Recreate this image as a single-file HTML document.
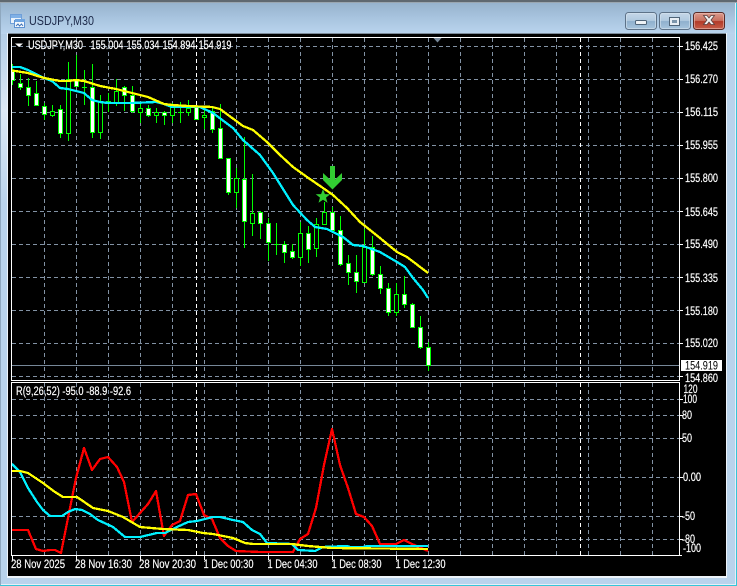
<!DOCTYPE html>
<html><head><meta charset="utf-8"><title>USDJPY,M30</title>
<style>
html,body{margin:0;padding:0;background:#b9d3ec;overflow:hidden}
svg{display:block}
text{font-family:"Liberation Sans",sans-serif;font-size:11.5px;fill:#fff;stroke:#fff;stroke-width:.18px}
</style></head><body>
<svg width="737" height="586" viewBox="0 0 737 586" xmlns="http://www.w3.org/2000/svg">
<defs>
<linearGradient id="tb" x1="0" y1="0" x2="0" y2="1"><stop offset="0" stop-color="#93afc9"/><stop offset=".5" stop-color="#a7c3de"/><stop offset="1" stop-color="#bad4ee"/></linearGradient>
<linearGradient id="ls" x1="0" y1="0" x2="0" y2="1"><stop offset="0" stop-color="#b3cee8"/><stop offset=".45" stop-color="#dce9f5"/><stop offset="1" stop-color="#b9d3ec"/></linearGradient>
<linearGradient id="bn" x1="0" y1="0" x2="0" y2="1"><stop offset="0" stop-color="#c6d8e9"/><stop offset=".48" stop-color="#b0c9df"/><stop offset=".52" stop-color="#8fb0cd"/><stop offset="1" stop-color="#a9c6de"/></linearGradient>
<linearGradient id="bc" x1="0" y1="0" x2="0" y2="1"><stop offset="0" stop-color="#dc9d90"/><stop offset=".48" stop-color="#c9705f"/><stop offset=".52" stop-color="#b23a28"/><stop offset="1" stop-color="#c8604c"/></linearGradient>
<clipPath id="mc"><rect x="12" y="38" width="667" height="342"/></clipPath>
<clipPath id="sc"><rect x="12" y="383" width="667" height="172"/></clipPath>
</defs>

<!-- window frame -->
<rect width="737" height="586" fill="#b9d3ec"/>
<rect width="737" height="34" fill="url(#tb)"/>
<rect y="34" width="8" height="170" fill="url(#ls)"/>
<rect width="737" height="2" fill="#5f6870"/>
<rect y="2" width="737" height="1" fill="#9aa6b0"/>
<rect x="0" y="3" width="1" height="582" fill="#8fa8bf"/>
<rect y="585" width="737" height="1" fill="#35c6d8"/>
<rect x="736" y="3" width="1" height="583" fill="#35c6d8"/>
<rect x="1" y="584" width="735" height="1" fill="#e6eff8"/>
<rect x="735" y="3" width="1" height="582" fill="#e6eff8"/>
<rect x="7" y="33" width="720" height="545" fill="#eef4fa"/>
<rect x="8" y="33" width="718" height="1" fill="#7d8c9a"/>
<rect x="8" y="34" width="718" height="542" fill="#000"/>

<!-- title icon -->
<g shape-rendering="crispEdges">
<rect x="10.500" y="14.500" width="11" height="9" fill="#eaf2fb" stroke="#6f9fd8"/>
<rect x="11" y="15" width="10" height="3" fill="#7fb0e6"/>
<rect x="14.500" y="20.500" width="10" height="7" fill="#f4f8fd" stroke="#5e92d2"/>
<rect x="15" y="19" width="10" height="3" fill="#6ea4e0"/>
</g>
<path d="M16 26l2-2 1.500 2 2-2 1.500 2" fill="none" stroke="#3f73b8" stroke-width="1"/>
<text x="29" y="25" textLength="65" lengthAdjust="spacingAndGlyphs" style="font-size:12.500px;fill:#1d2a4a;stroke:none">USDJPY,M30</text>

<!-- caption buttons -->
<rect x="625.500" y="12.500" width="31" height="17" rx="3" fill="url(#bn)" stroke="#5d7288"/>
<rect x="626.500" y="13.500" width="29" height="15" rx="2" fill="none" stroke="#d6e3ef" stroke-opacity=".6"/>
<rect x="635.500" y="20.500" width="11" height="4" rx="1" fill="#eef2f6" stroke="#4f6478"/>
<rect x="659.500" y="12.500" width="31" height="17" rx="3" fill="url(#bn)" stroke="#5d7288"/>
<rect x="660.500" y="13.500" width="29" height="15" rx="2" fill="none" stroke="#d6e3ef" stroke-opacity=".6"/>
<rect x="669.500" y="17.500" width="10" height="8" fill="#e8eef4" stroke="#4f6478"/>
<rect x="672" y="20" width="5" height="3" fill="#7d96ac" stroke="none"/>
<rect x="693.500" y="12.500" width="31" height="17" rx="3" fill="url(#bc)" stroke="#5a2a26"/>
<rect x="694.500" y="13.500" width="29" height="15" rx="2" fill="none" stroke="#ecc4bb" stroke-opacity=".55"/>
<path d="M703.500 15.500h3.500l2 2.500 2-2.500h3.500l-3.500 4.500 3.500 4.500h-3.500l-2-2.500-2 2.500h-3.500l3.500-4.500z" fill="#f2f2f2" stroke="#5a4040" stroke-width=".8"/>

<!-- grid -->
<g stroke="#8292a4" stroke-width="1" stroke-dasharray="4 3" fill="none" shape-rendering="crispEdges">
<path d="M44.500 38V380M76.500 38V380M108.500 38V380M140.500 38V380M172.500 38V380M204.500 38V380M236.500 38V380M268.500 38V380M300.500 38V380M332.500 38V380M364.500 38V380M396.500 38V380M428.500 38V380M460.500 38V380M492.500 38V380M524.500 38V380M556.500 38V380M588.500 38V380M620.500 38V380M652.500 38V380"/>
<path d="M44.500 383V555M76.500 383V555M108.500 383V555M140.500 383V555M172.500 383V555M204.500 383V555M236.500 383V555M268.500 383V555M300.500 383V555M332.500 383V555M364.500 383V555M396.500 383V555M428.500 383V555M460.500 383V555M492.500 383V555M524.500 383V555M556.500 383V555M588.500 383V555M620.500 383V555M652.500 383V555"/>
<path d="M12 46.500H679M12 79.500H679M12 112.500H679M12 145.500H679M12 178.500H679M12 211.500H679M12 244.500H679M12 277.500H679M12 310.500H679M12 343.500H679M12 376.500H679"/>
<path d="M12 399.500H679M12 415.500H679M12 438.500H679M12 477.500H679M12 516.500H679M12 539.500H679"/>
</g>
<g stroke="#fff" stroke-dasharray="4 3" fill="none" shape-rendering="crispEdges">
<path d="M196.500 38V380M580.500 38V380M196.500 383V555M580.500 383V555"/>
</g>
<path d="M12 365.500H680" stroke="#778899" shape-rendering="crispEdges"/>
<path d="M433 37.500h9l-4.500 5z" fill="#778899"/>

<!-- candles -->
<g clip-path="url(#mc)" shape-rendering="crispEdges">
<path fill="none" stroke="#0f0" d="M12.500 64V85M20.500 74V90M28.500 78V106M36.500 81V106M44.500 103V120M52.500 105V117M60.500 105V138M68.500 62V141M76.500 55V87M84.500 70V105M92.500 64V138M100.500 95V139M108.500 93V112M116.500 79V106M124.500 86V111M132.500 86V113M140.500 103V123M148.500 105V117M156.500 108V123M164.500 111V125M172.500 103V123M180.500 102V123M188.500 100V116M196.500 106V120M204.500 106V129M212.500 107V133M220.500 104V159M228.500 158V195M236.500 168V208M244.500 137V248M252.500 174V236M260.500 211V239M268.500 218V261M276.500 223V255M284.500 241V263M292.500 244V259M300.500 222V266M308.500 226V263M316.500 218V257M324.500 202V224M332.500 207V233M340.500 216V266M348.500 255V285M356.500 255V293M364.500 229V282M372.500 236V276M380.500 266V294M388.500 283V316M396.500 283V316M404.500 276V308M412.500 303V327M420.500 316V349M428.500 342V371M82 87.500H87M178 112.500H183M274 244.500H279"/>
<path fill="#000" stroke="#0f0" d="M50.500 111.500h4v4h-4zM66.500 79.500h4v54h-4zM98.500 102.500h4v30h-4zM106.500 101.500h4v2h-4zM114.500 91.500h4v12h-4zM138.500 108.500h4v4h-4zM154.500 112.500h4v3h-4zM170.500 107.500h4v8h-4zM186.500 108.500h4v4h-4zM202.500 115.500h4v2h-4zM234.500 178.500h4v14h-4zM250.500 213.500h4v10h-4zM298.500 233.500h4v24h-4zM314.500 224.500h4v24h-4zM322.500 212.500h4v12h-4zM362.500 247.500h4v35h-4zM394.500 294.500h4v18h-4z"/>
<path fill="#fff" stroke="#0f0" d="M10.500 71.500h4v9h-4zM18.500 83.500h4v4h-4zM26.500 87.500h4v8h-4zM34.500 93.500h4v12h-4zM42.500 106.500h4v8h-4zM58.500 109.500h4v24h-4zM74.500 80.500h4v6h-4zM90.500 87.500h4v45h-4zM122.500 87.500h4v8h-4zM130.500 95.500h4v16h-4zM146.500 108.500h4v7h-4zM162.500 112.500h4v3h-4zM194.500 107.500h4v12h-4zM210.500 111.500h4v18h-4zM218.500 128.500h4v30h-4zM226.500 158.500h4v34h-4zM242.500 179.500h4v42h-4zM258.500 212.500h4v11h-4zM266.500 223.500h4v19h-4zM282.500 244.500h4v8h-4zM290.500 251.500h4v6h-4zM306.500 233.500h4v16h-4zM330.500 212.500h4v18h-4zM338.500 230.500h4v34h-4zM346.500 263.500h4v9h-4zM354.500 272.500h4v9h-4zM370.500 247.500h4v27h-4zM378.500 274.500h4v14h-4zM386.500 288.500h4v24h-4zM402.500 294.500h4v10h-4zM410.500 304.500h4v23h-4zM418.500 327.500h4v20h-4zM426.500 347.500h4v18h-4z"/>
</g>

<!-- moving averages -->
<g clip-path="url(#mc)" fill="none" stroke-width="2.300" stroke-linejoin="round" shape-rendering="crispEdges">
<polyline stroke="#00f0ff" points="12,67 20,67 28,70 44,78 52,81 60,88 68,89 76,91 84,93 92,100 100,102 108,103 132,103 156,102 164,104 172,107 188,107 200,107 213,113 233,128 243,140 260,155 273,173 293,205 307,220 315,227 327,229 343,237 353,245 363,246 380,252 397,262 405,267 413,278 423,290 428,298"/>
<polyline stroke="#ffff00" points="12,70.500 28,73 44,78 60,81 68,81 76,80 84,81 100,86 116,89 132,93 148,97 164,104 172,105 188,106 212,107 220,109 243,126 253,130 267,142 280,155 293,167 307,177 323,188 333,195 347,208 360,222 380,238 397,252 407,257 428,273"/>
</g>

<!-- signal arrow and star -->
<path d="M330 166h5v13.500l7-6.500v7l-9.500 9.500-9.500-9.500v-7l7 6.500z" fill="#32cd32"/>
<path d="M323 189l1.900 5.100 5.400.2-4.300 3.300 1.500 5.200-4.500-3-4.500 3 1.500-5.200-4.300-3.300 5.400-.2z" fill="#32cd32"/>

<!-- oscillator -->
<g clip-path="url(#sc)" fill="none" stroke-width="2.300" stroke-linejoin="round" shape-rendering="crispEdges">
<polyline stroke="#ff0000" points="12,530 28,530 36,549 43,551 50,550 55,550 61,553 68,518 76,478 84,448 92,470 100,459 108,457 117,467 124,482 132,522 148,504 156,491 164,536 172,525 180,521 188,495 196,494 204,515 212,519 220,538 228,546 236,551 260,552 293,552 300,539 308,534 316,508 324,465 332,429 340,465 348,488 356,514 364,517 372,526 380,544 396,544 404,540 412,544 428,551"/>
<polyline stroke="#00f0ff" points="12,464 20,472 28,488 37,502 43,510 50,516 62,516 68,512 75,509 82,510 90,514 98,520 113,527 125,537 140,537 157,533 165,533 177,527 188,522 197,521 213,517 220,517 233,520 243,522 252,530 260,534 267,543 292,544 298,550 315,551 323,547 347,546 350,547 363,547 367,546 428,546"/>
<polyline stroke="#ffff00" points="12,471 20,471 28,473 43,483 55,492 63,497 77,497 93,508 108,511 123,517 140,527 163,529 188,530 203,533 213,534 233,538 245,543 253,544 292,544 308,546 332,548 428,549"/>
</g>

<!-- frames and ticks -->
<g fill="none" stroke="#fff" shape-rendering="crispEdges">
<rect x="11.500" y="37.500" width="668" height="343"/>
<rect x="11.500" y="382.500" width="668" height="173"/>
<path d="M680 46.500h3M680 79.500h3M680 112.500h3M680 145.500h3M680 178.500h3M680 211.500h3M680 244.500h3M680 277.500h3M680 310.500h3M680 343.500h3M680 376.500h3M680 399.500h3M680 415.500h3M680 438.500h3M680 477.500h3M680 516.500h3M680 539.500h3M680 555.500h2"/>
<path d="M12.500 556v4M76.500 556v4M140.500 556v4M204.500 556v4M268.500 556v4M332.500 556v4M396.500 556v4"/>
</g>

<!-- header -->
<path d="M15 43.500h8l-4 3.500z" fill="#fff"/>
<text x="28" y="49" textLength="55" lengthAdjust="spacingAndGlyphs">USDJPY,M30</text>
<text x="90.500" y="49" textLength="33" lengthAdjust="spacingAndGlyphs">155.004</text>
<text x="126.500" y="49" textLength="33" lengthAdjust="spacingAndGlyphs">155.034</text>
<text x="162.500" y="49" textLength="33" lengthAdjust="spacingAndGlyphs">154.894</text>
<text x="198.500" y="49" textLength="33" lengthAdjust="spacingAndGlyphs">154.919</text>
<text x="16" y="395" textLength="115" lengthAdjust="spacingAndGlyphs">R(9,26,52) -95.0 -88.9 -92.6</text>

<!-- price axis -->
<g>
<text x="685" y="50" textLength="33" lengthAdjust="spacingAndGlyphs">156.425</text>
<text x="685" y="83" textLength="33" lengthAdjust="spacingAndGlyphs">156.270</text>
<text x="685" y="116" textLength="33" lengthAdjust="spacingAndGlyphs">156.115</text>
<text x="685" y="149" textLength="33" lengthAdjust="spacingAndGlyphs">155.955</text>
<text x="685" y="182" textLength="33" lengthAdjust="spacingAndGlyphs">155.800</text>
<text x="685" y="216" textLength="33" lengthAdjust="spacingAndGlyphs">155.645</text>
<text x="685" y="248" textLength="33" lengthAdjust="spacingAndGlyphs">155.490</text>
<text x="685" y="282" textLength="33" lengthAdjust="spacingAndGlyphs">155.335</text>
<text x="685" y="315" textLength="33" lengthAdjust="spacingAndGlyphs">155.180</text>
<text x="685" y="347" textLength="33" lengthAdjust="spacingAndGlyphs">155.020</text>
<text x="685" y="382" textLength="33" lengthAdjust="spacingAndGlyphs">154.860</text>
<rect x="681" y="360" width="41" height="11" fill="#fff"/>
<text x="685" y="369.500" textLength="33" lengthAdjust="spacingAndGlyphs" style="fill:#000;stroke:none">154.919</text>
<text x="683.500" y="393" textLength="14" lengthAdjust="spacingAndGlyphs">120</text>
<text x="683" y="403" textLength="14" lengthAdjust="spacingAndGlyphs">100</text>
<text x="682" y="419" textLength="10" lengthAdjust="spacingAndGlyphs">80</text>
<text x="682" y="442" textLength="10" lengthAdjust="spacingAndGlyphs">50</text>
<text x="683" y="481" textLength="18" lengthAdjust="spacingAndGlyphs">0.00</text>
<text x="682" y="520" textLength="13" lengthAdjust="spacingAndGlyphs">-50</text>
<text x="682" y="543" textLength="13" lengthAdjust="spacingAndGlyphs">-80</text>
<text x="683" y="552" textLength="18" lengthAdjust="spacingAndGlyphs">-100</text>
</g>

<!-- time axis -->
<g>
<text x="11" y="568" textLength="54" lengthAdjust="spacingAndGlyphs">28 Nov 2025</text>
<text x="75" y="568" textLength="57" lengthAdjust="spacingAndGlyphs">28 Nov 16:30</text>
<text x="139" y="568" textLength="57" lengthAdjust="spacingAndGlyphs">28 Nov 20:30</text>
<text x="203.500" y="568" textLength="50" lengthAdjust="spacingAndGlyphs">1 Dec 00:30</text>
<text x="267.500" y="568" textLength="50" lengthAdjust="spacingAndGlyphs">1 Dec 04:30</text>
<text x="331.500" y="568" textLength="50" lengthAdjust="spacingAndGlyphs">1 Dec 08:30</text>
<text x="395.500" y="568" textLength="50" lengthAdjust="spacingAndGlyphs">1 Dec 12:30</text>
</g>
</svg>
</body></html>
